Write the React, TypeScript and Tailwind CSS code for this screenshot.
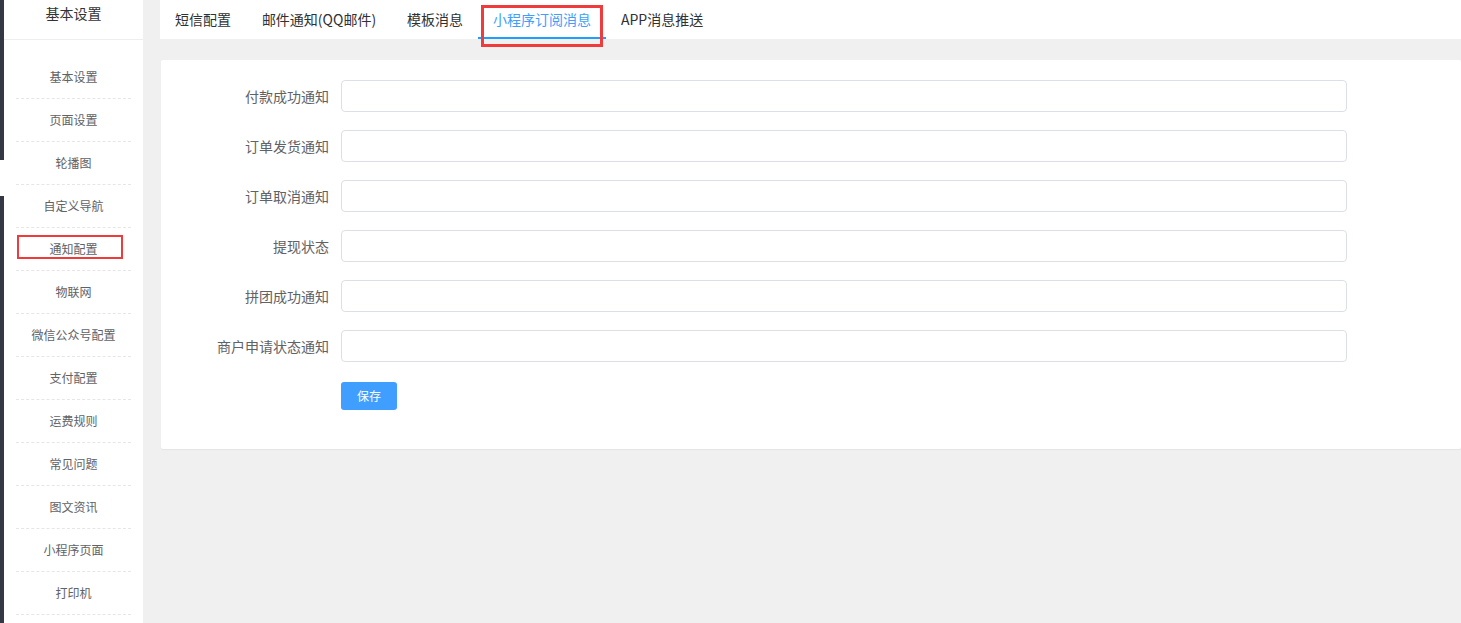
// Settings page: notification config, mini-program subscription tab
const menu = [
  "基本设置",
  "页面设置",
  "轮播图",
  "自定义导航",
  "通知配置",
  "物联网",
  "微信公众号配置",
  "支付配置",
  "运费规则",
  "常见问题",
  "图文资讯",
  "小程序页面",
  "打印机",
];

const tabs = ["短信配置", "邮件通知(QQ邮件)", "模板消息", "小程序订阅消息", "APP消息推送"];

const fields = [
  "付款成功通知",
  "订单发货通知",
  "订单取消通知",
  "提现状态",
  "拼团成功通知",
  "商户申请状态通知",
];

export default function App() {
  return (
    <div
      className="flex h-[623px] w-full overflow-hidden bg-[#f0f0f0]"
      style={{ fontFamily: '"Noto Sans CJK SC", "Noto Sans", sans-serif' }}
    >
      {/* dark edge of the outer nav */}
      <div className="flex w-[4px] shrink-0 flex-col">
        <div className="h-[160px] bg-[#333844]" />
        <div className="h-[36px] bg-white" />
        <div className="flex-1 bg-[#333844]" />
      </div>

      {/* sub menu */}
      <aside className="flex w-[139px] shrink-0 flex-col bg-white">
        <div className="flex h-[40px] items-center justify-center border-b border-[#eeeeee] pb-[12px] text-[14px] text-[#333]">
          基本设置
        </div>
        <ul className="pt-[16px]">
          {menu.map((m) => (
            <li
              key={m}
              className="mx-[12px] flex h-[43px] items-center justify-center border-b border-dashed border-[#e6e6e6] text-[12px] text-[#606266]"
            >
              {m === "通知配置" ? (
                <span className="relative">
                  {m}
                  <span className="pointer-events-none absolute left-[-32px] top-[-5px] h-[24px] w-[106px] border-[2px] border-[#ef3b3b]" />
                </span>
              ) : (
                m
              )}
            </li>
          ))}
        </ul>
      </aside>

      <main className="ml-[17px] flex flex-1 flex-col">
        {/* tabs */}
        <nav className="flex h-[39px] items-stretch bg-white text-[14px] text-[#303133]">
          {tabs.map((t) => {
            const active = t === "小程序订阅消息";
            if (active) {
              return (
                <div
                  key={t}
                  className="relative flex items-center border-b-2 border-[#1e9fff] px-[15px] pt-[2px] text-[#409eff]"
                >
                  {t}
                  <span className="pointer-events-none absolute left-[3px] top-[5px] h-[42px] w-[122px] border-[3px] border-[#ef3b3b]" />
                </div>
              );
            }
            return (
              <div
                key={t}
                className={
                  t === "邮件通知(QQ邮件)"
                    ? "flex w-[146px] items-center justify-center px-[15px]"
                    : "flex items-center px-[15px]"
                }
              >
                {t}
              </div>
            );
          })}
        </nav>

        {/* form card */}
        <section className="ml-[1px] mt-[21px] rounded-[2px] bg-white pb-[39px] pt-[20px] shadow-[0_1px_1px_rgba(0,0,0,0.05)]">
          {fields.map((f) => (
            <div key={f} className="mb-[18px] flex items-center">
              <label className="w-[180px] pr-[12px] text-right text-[14px] text-[#606266]">{f}</label>
              <input
                className="h-[32px] w-[1006px] rounded-[4px] border border-[#dcdfe6] px-[15px] text-[14px] outline-none"
                type="text"
              />
            </div>
          ))}
          <div className="flex pl-[180px] pt-[2px]">
            <button className="h-[28px] w-[56px] rounded-[3px] bg-[#409eff] text-[12px] text-white">保存</button>
          </div>
        </section>
      </main>
    </div>
  );
}
